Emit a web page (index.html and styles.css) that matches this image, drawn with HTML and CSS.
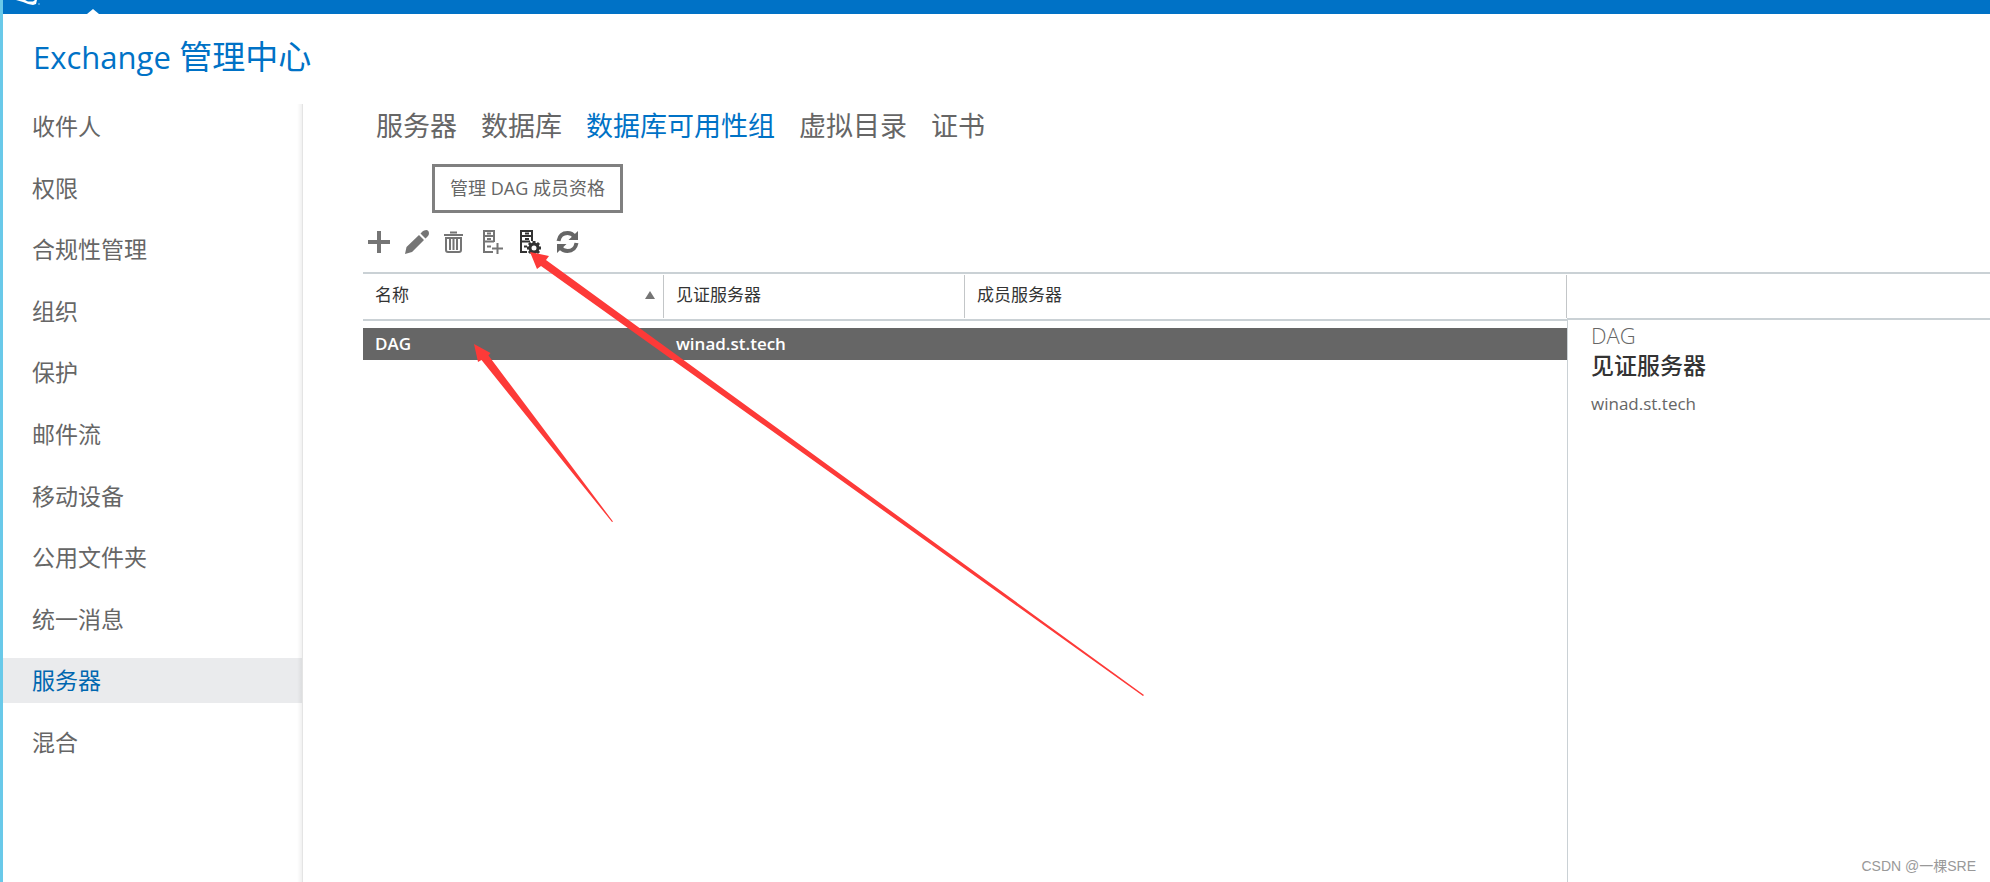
FILE: index.html
```html
<!DOCTYPE html>
<html lang="zh-CN">
<head>
<meta charset="utf-8">
<title>Exchange 管理中心</title>
<link rel="stylesheet" href="styles.css">
</head>
<body>
<div class="app">
  <header class="topbar">
    <svg class="brand" viewBox="0 0 40 11" aria-hidden="true"><path d="M8 0H17L20 1.500H25L27 0H29L28 4L25 5L20 4L15 2Z" fill="#fff"/><path d="M30 4H32" stroke="#8fc3e8"/></svg>
    <span class="caret"></span>
  </header>
  <h1 class="title"><span class="latin">Exchange</span> 管理中心</h1>
  <div class="body">
    <nav class="side" aria-label="功能">
      <a href="#">收件人</a>
      <a href="#">权限</a>
      <a href="#">合规性管理</a>
      <a href="#">组织</a>
      <a href="#">保护</a>
      <a href="#">邮件流</a>
      <a href="#">移动设备</a>
      <a href="#">公用文件夹</a>
      <a href="#">统一消息</a>
      <a href="#" class="active" aria-current="page">服务器</a>
      <a href="#">混合</a>
    </nav>
    <main class="main">
      <nav class="tabs" aria-label="服务器">
        <a href="#">服务器</a>
        <a href="#">数据库</a>
        <a href="#" class="active">数据库可用性组</a>
        <a href="#">虚拟目录</a>
        <a href="#">证书</a>
      </nav>
      <div class="toolbar">
        <button type="button" aria-label="新建"><svg viewBox="0 0 24 24"><path d="M12 1V23M1 12H23" stroke="#757575" stroke-width="4"/></svg></button>
        <button type="button" aria-label="编辑"><svg viewBox="0 0 24 24"><path d="M0 24L1.500 17L14 5L19 10L7 22ZM15.500 3.500L18 1Q20 0 22 0Q24 1 24 3Q24 5 23 6L20.500 8.500Z" fill="#757575"/></svg></button>
        <button type="button" aria-label="删除"><svg viewBox="0 0 24 24"><path d="M1 5H20M7 2.500H14" stroke="#757575" stroke-width="2"/><path d="M3 8H18V20Q18 22 16 22H5Q3 22 3 20Z" fill="none" stroke="#757575" stroke-width="2"/><path d="M7 9V20M10.500 9V20M14 9V20" stroke="#757575" stroke-width="2"/></svg></button>
        <button type="button" aria-label="添加服务器"><svg viewBox="0 0 24 24"><path d="M13 12V1H3V22H12M3 6H13M3 11.500H13M6 16.500H10M6 3.500H10M6 9H10M16.500 13V24M11 18.500H22" fill="none" stroke="#757575" stroke-width="2"/></svg></button>
        <div class="tip-anchor">
          <button type="button" aria-describedby="dag-tip" aria-label="管理成员"><svg viewBox="0 0 24 24"><path d="M13 11V1H2V22H8M2 6H13M2 11.500H11M5 16.500H8M6 3.500H10M6 9H10" fill="none" stroke="#333" stroke-width="2"/><circle cx="15" cy="18" r="4" fill="#fff" stroke="#333" stroke-width="3"/><path d="M15 11V14M15 22V25M8 18H11M19 18H22M10 13L12 15M18 21L20 23M20 13L18 15M12 21L10 23" stroke="#333" stroke-width="3"/></svg></button>
          <div class="tip" role="tooltip" id="dag-tip">管理 <span>DAG</span> 成员资格</div>
        </div>
        <button type="button" aria-label="刷新"><svg viewBox="0 0 24 24"><path d="M1.500 11Q3 3 10.500 3Q15 3 17.500 6.500M19.500 13Q18 21 10.500 21Q6 21 3.500 17.500" fill="none" stroke="#666" stroke-width="4"/><path d="M21 1V10H11.500ZM0 23V14H9.500Z" fill="#666"/></svg></button>
      </div>
      <div class="content">
        <section class="list">
          <table>
            <thead><tr>
              <th class="c1"><div class="sort">名称<svg viewBox="0 0 10 8" aria-hidden="true"><path d="M5 0L10 8H0Z" fill="#757575"/></svg></div></th>
              <th class="c2">见证服务器</th>
              <th class="c3">成员服务器</th>
            </tr></thead>
            <tbody><tr><td>DAG</td><td>winad.st.tech</td><td></td></tr></tbody>
          </table>
        </section>
        <aside class="details">
          <div class="details-head"></div>
          <div class="details-body">
            <div class="d-name">DAG</div>
            <h2>见证服务器</h2>
            <div class="d-value">winad.st.tech</div>
          </div>
        </aside>
      </div>
    </main>
  </div>
  <svg class="arrows" width="1990" height="882" aria-hidden="true">
    <path d="M474 344L490.500 353L488.500 355.500L613 521.500L612 522L481.500 360L478 362Z" fill="#fd3a38"/>
    <path d="M530 252L549 256L546 260L1144 695L1143 696L541 266L537 269Z" fill="#fd3a38"/>
  </svg>
  <div class="watermark">CSDN @一棵SRE</div>
</div>
</body>
</html>
```
FILE: styles.css
```css
* { box-sizing: border-box; }
body {
  margin: 0;
  background: #fff;
  color: #666;
  font-family: "Open Sans", "Noto Sans CJK SC", sans-serif;
}
a { color: inherit; text-decoration: none; }
.app {
  position: relative;
  display: flex;
  flex-direction: column;
  min-height: 100vh;
  border-left: 3px solid #69c9e9;
  overflow: hidden;
}
.topbar {
  position: relative;
  height: 14px;
  background: #0072c6;
}
.brand { position: absolute; left: 5px; top: 0; width: 40px; height: 11px; }
.caret {
  position: absolute;
  left: 84px;
  bottom: 0;
  border: 6px solid transparent;
  border-top: 0;
  border-bottom: 5px solid #fff;
}
.title {
  margin: 0;
  padding: 18px 0 0 30px;
  height: 90px;
  font-size: 33px;
  line-height: 50px;
  font-weight: 400;
  color: #0072c6;
}
.title .latin { font-size: 31px; }
.body { display: flex; flex: 1; }
.side {
  flex: 0 0 300px;
  position: relative;
  display: grid;
  grid-template-rows: repeat(11, 45px);
  align-content: space-between;
  padding-bottom: 117px;
  font-size: 23px;
  line-height: 45px;
  border-right: 1px solid #e4e4e4;
}
.side::after {
  content: "";
  position: absolute;
  top: 0;
  right: 0;
  bottom: 0;
  width: 5px;
  background: linear-gradient(to right, rgba(0, 0, 0, 0), rgba(0, 0, 0, 0.06));
}
.side a { padding-left: 29px; }
.side .active { background: #eaebed; color: #0067b0; }
.main {
  flex: 1;
  min-width: 0;
  display: flex;
  flex-direction: column;
  padding-left: 60px;
}
.tabs {
  display: flex;
  gap: 24px;
  padding-left: 13px;
  font-size: 27px;
  line-height: 44px;
}
.tabs .active { color: #0072c6; }
.toolbar {
  display: flex;
  align-items: flex-start;
  gap: 14px;
  padding: 82px 0 0 4px;
  height: 124px;
}
button {
  display: block;
  width: 24px;
  height: 24px;
  padding: 0;
  border: 0;
  background: none;
}
button svg { display: block; width: 24px; height: 24px; overflow: visible; }
.tip-anchor { position: relative; }
.tip {
  position: absolute;
  left: -87px;
  bottom: 41px;
  padding: 0 15px;
  border: 3px solid #808080;
  background: #fff;
  font-size: 18px;
  line-height: 43px;
  white-space: nowrap;
}
.content { display: flex; flex: 1; }
.list { flex: 1; min-width: 0; border-top: 2px solid #cad1d5; }
table {
  width: 100%;
  table-layout: fixed;
  border-collapse: separate;
  border-spacing: 0;
}
th {
  height: 47px;
  padding: 0 0 3px 12px;
  border-bottom: 2px solid #cad1d5;
  text-align: left;
  font-size: 17px;
  line-height: 24px;
  font-weight: 400;
  color: #333;
  background: linear-gradient(#c3c6c8, #c3c6c8) right 1px / 1px 43px no-repeat;
}
.c1, .c2 { width: 301px; }
.sort { display: flex; align-items: center; justify-content: space-between; padding-right: 9px; }
.sort svg { width: 10px; height: 8px; }
tbody::before { content: ""; display: block; height: 7px; }
td {
  height: 32px;
  padding: 0 12px;
  background: #666;
  color: #fff;
  font-size: 17px;
  font-weight: 600;
  line-height: 32px;
}
.details { flex: 0 0 423px; border-top: 2px solid #cad1d5; display: flex; flex-direction: column; }
.details-head { height: 46px; border-bottom: 2px solid #cad1d5; }
.details-body { flex: 1; border-left: 1px solid #cad1d5; padding: 0 23px; }
.d-name { font-size: 22px; line-height: 30px; font-weight: 300; }
h2 { margin: 0; font-size: 23px; line-height: 30px; font-weight: 500; color: #333; }
.d-value { padding-top: 10px; font-size: 17px; line-height: 28px; }
.arrows { position: absolute; left: -3px; top: 0; pointer-events: none; }
.watermark {
  position: absolute;
  right: 14px;
  bottom: 5px;
  font-family: "Liberation Sans", "Noto Sans CJK SC", sans-serif;
  font-size: 14px;
  line-height: 22px;
  color: #999;
}
```
